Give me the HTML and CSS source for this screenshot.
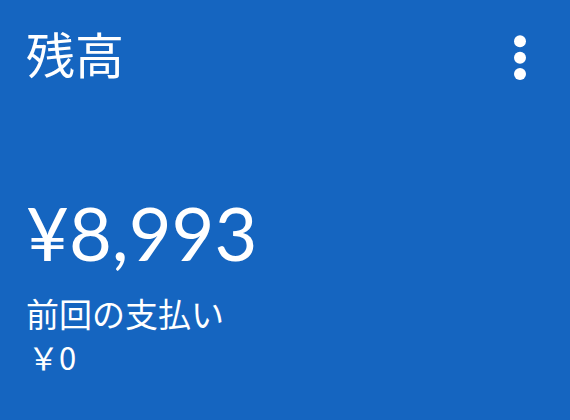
FILE: index.html
```html
<!DOCTYPE html>
<html lang="ja">
<head>
<meta charset="utf-8">
<link rel="stylesheet" href="styles.css">
</head>
<body>
<div class="card">
  <div class="header">
    <h1 class="title">残高</h1>
    <svg class="more" width="24" height="60" viewBox="0 0 24 60">
      <circle cx="12" cy="13.3" r="6" fill="#fff"/>
      <circle cx="12" cy="29.7" r="6" fill="#fff"/>
      <circle cx="12" cy="46" r="6" fill="#fff"/>
    </svg>
  </div>
  <div class="amount">¥8,993</div>
  <div class="label">前回の支払い</div>
  <div class="last">￥0</div>
</div>
</body>
</html>
```
FILE: styles.css
```css
html, body {
  margin: 0;
  padding: 0;
  background: #1565c0;
}
.card {
  width: 570px;
  height: 420px;
  box-sizing: border-box;
  padding: 21px 32px 0 26px;
  color: #fff;
  font-family: "Noto Sans CJK JP", "Noto Sans", sans-serif;
}
.header {
  display: flex;
  justify-content: space-between;
  align-items: flex-start;
}
.title {
  margin: 0;
  font-size: 49px;
  font-weight: 400;
  line-height: 64px;
}
.more {
  margin-top: 7px;
  margin-right: 6px;
}
.amount {
  margin-top: 100px;
  font-family: "Lato", sans-serif;
  font-size: 74px;
  line-height: 90px;
}
.label {
  font-size: 33px;
  line-height: 44px;
  margin-top: 13px;
}
.last {
  font-size: 31px;
  line-height: 44px;
  margin-top: 0;
  padding-left: 2px;
}
```
